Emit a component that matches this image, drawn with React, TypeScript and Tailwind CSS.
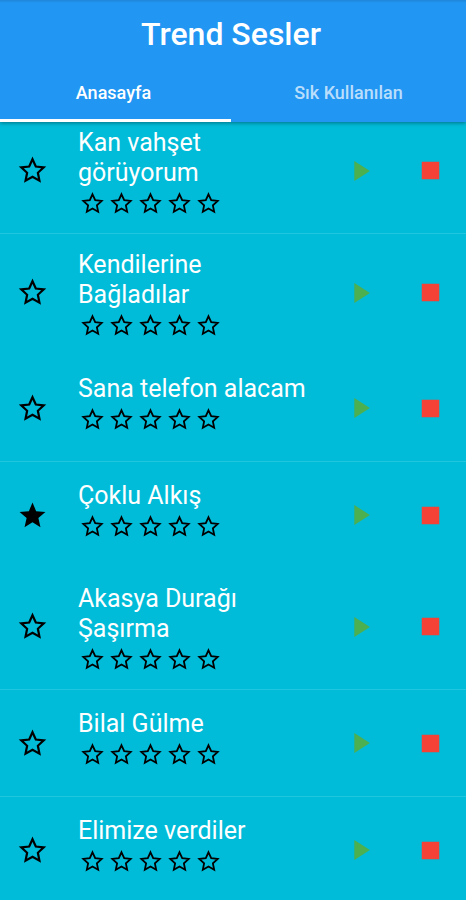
/**
 * Sound board — tab bar on top, scrollable list of sounds below.
 */
import { useState } from "react";
import clsx from "clsx";
import { MdPlayArrow, MdStar, MdStop } from "react-icons/md";

type Sound = {
  id: number;
  title: string;
  favorite?: boolean;
  long?: boolean; // title wraps on two lines
  divider?: boolean;
};

const SOUNDS: Sound[] = [
  { id: 1, title: "Kan vahşet görüyorum", long: true, divider: true },
  { id: 2, title: "Kendilerine Bağladılar", long: true },
  { id: 3, title: "Sana telefon alacam", divider: true },
  { id: 4, title: "Çoklu Alkış", favorite: true },
  { id: 5, title: "Akasya Durağı Şaşırma", long: true, divider: true },
  { id: 6, title: "Bilal Gülme", divider: true },
  { id: 7, title: "Elimize verdiler" },
];

const TABS = ["Anasayfa", "Sık Kullanılan"];

// Sharp five-point outline, tips reach the edge of the 24px grid
function StarOutline({ size }: { size: number }) {
  return (
    <svg
      width={size}
      height={size}
      viewBox="0 0 24 24"
      fill="none"
      stroke="currentColor"
      strokeWidth={1.6}
      strokeMiterlimit={8}
    >
      <path d="M12 3.8L14.41 9.08L20.18 9.74L15.9 13.67L17.05 19.36L12 16.5L6.95 19.36L8.1 13.67L3.82 9.74L9.59 9.08Z" />
    </svg>
  );
}

function Rating({ title }: { title: string }) {
  const [value, setValue] = useState(0);
  return (
    <div className="flex h-[30px] items-center" role="group" aria-label={title}>
      {[1, 2, 3, 4, 5].map((n) => (
        <button
          key={n}
          type="button"
          onClick={() => setValue(n)}
          className="flex w-[29px] justify-center text-black"
          aria-label={`${n}`}
        >
          {n <= value ? <MdStar size={27} /> : <StarOutline size={27} />}
        </button>
      ))}
    </div>
  );
}

function SoundRow({ sound }: { sound: Sound }) {
  const [favorite, setFavorite] = useState(!!sound.favorite);
  return (
    <li className={clsx("flex pr-px", sound.divider && "border-b border-[#1fc6de]")}>
      <button
        type="button"
        onClick={() => setFavorite((v) => !v)}
        className={clsx("flex w-16 shrink-0 items-center justify-center text-black", sound.long && "pb-1")}
        aria-label="Favori"
        aria-pressed={favorite}
      >
        {favorite ? <MdStar size={31} /> : <StarOutline size={33} />}
      </button>

      <div className={clsx("min-w-0 flex-1 pr-3 pl-[14px]", sound.long ? "pt-4 pb-[15px]" : "pt-[19px] pb-[27px]")}>
        <h2 className="text-[25px] leading-[30px] text-white">{sound.title}</h2>
        <Rating title={sound.title} />
      </div>

      <div className={clsx("flex shrink-0", sound.long && "pb-1")}>
        <button type="button" className="flex w-[70px] items-center justify-center text-[#4caf50]" aria-label="Oynat">
          <MdPlayArrow size={34} />
        </button>
        <button type="button" className="flex w-[70px] items-center justify-center text-[#f44336]" aria-label="Durdur">
          <MdStop size={35} />
        </button>
      </div>
    </li>
  );
}

export default function App() {
  const [tab, setTab] = useState(0);

  return (
    <div className="flex h-screen flex-col overflow-hidden bg-[#00bcd9] font-['Roboto',sans-serif]">
      <header className="relative z-10 shrink-0 bg-[#2196f3] shadow-[0_1px_4px_rgba(0,0,0,0.4)]">
        <div className="h-[3px] bg-linear-to-b from-[#1f86d8] to-[#2196f3]" />
        <div className="-ml-1">
          <h1 className="pt-3 pb-[15px] text-center text-[32px] leading-[38px] font-medium text-white">Trend Sesler</h1>
          <div className="flex" role="tablist">
            {TABS.map((label, i) => (
              <button
                key={label}
                type="button"
                role="tab"
                aria-selected={tab === i}
                onClick={() => setTab(i)}
                className={clsx(
                  "h-[54px] flex-1 border-b-3 pb-0.5 text-[18px] font-medium",
                  tab === i ? "border-white text-white" : "border-transparent text-white/70",
                )}
              >
                {label}
              </button>
            ))}
          </div>
        </div>
      </header>

      <main className="min-h-0 flex-1 overflow-y-auto [scrollbar-width:none]">
        <ul className="-mt-[10px]">
          {SOUNDS.map((s) => (
            <SoundRow key={s.id} sound={s} />
          ))}
        </ul>
      </main>
    </div>
  );
}
